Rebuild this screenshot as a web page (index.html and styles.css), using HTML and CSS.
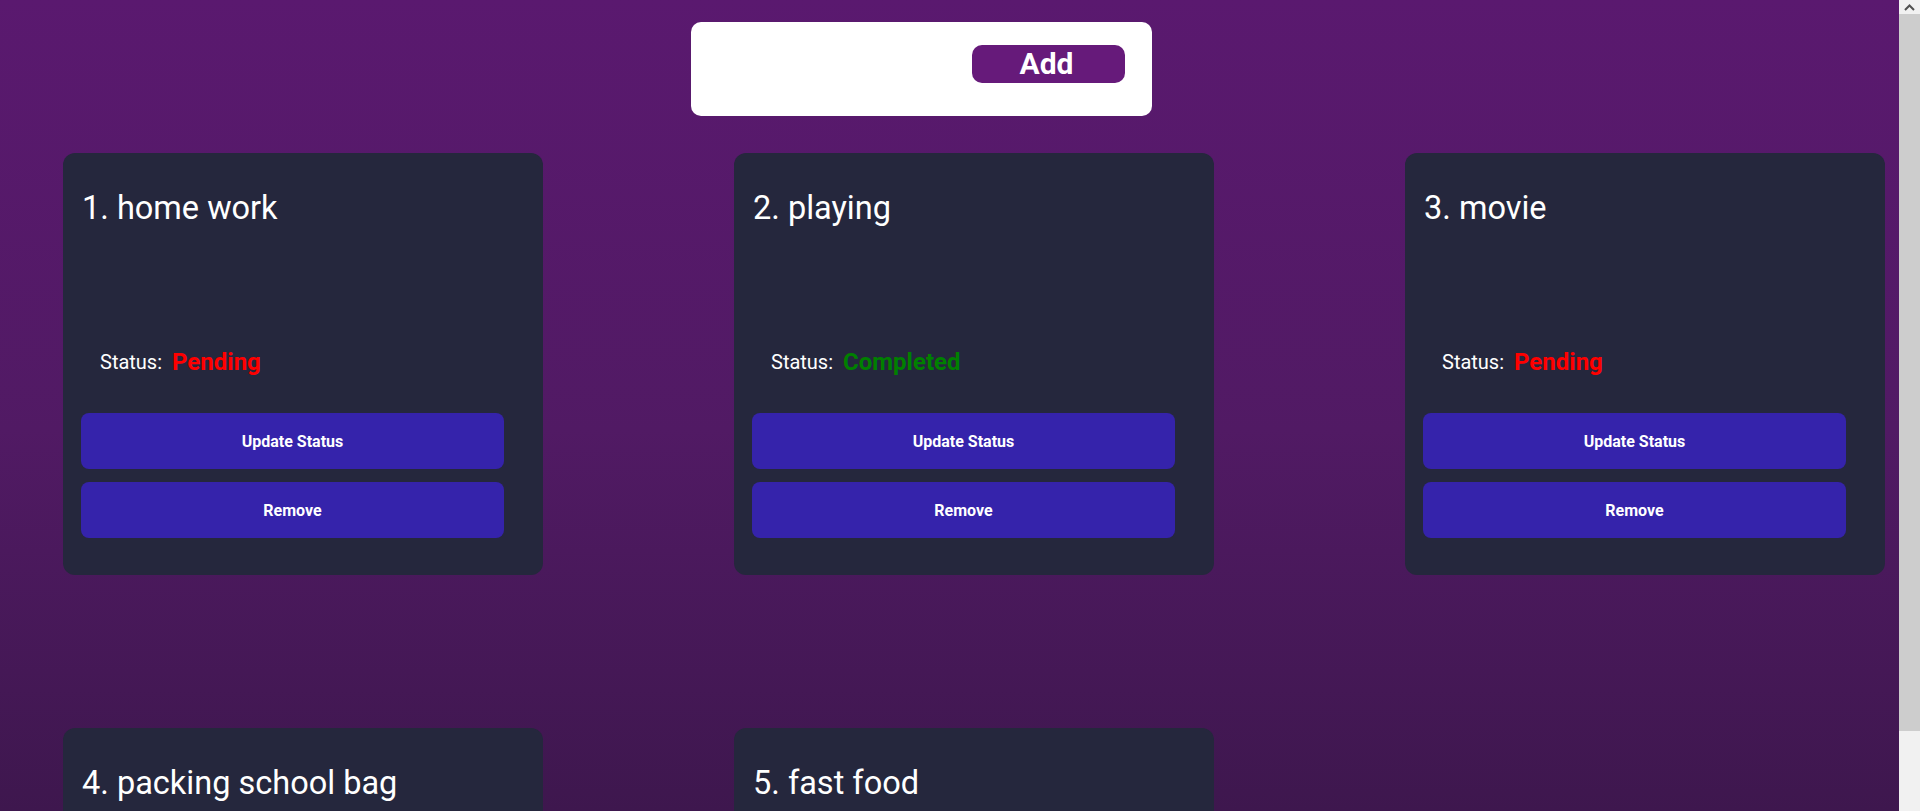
FILE: index.html
```html
<!DOCTYPE html>
<html lang="en">
<head>
<meta charset="utf-8">
<title>Todo</title>
<link rel="stylesheet" href="styles.css">
</head>
<body>
<div class="viewport">
<main class="page">
  <form class="add-form">
    <input class="task-input" type="text" aria-label="New task">
    <button class="add-btn" type="button">Add</button>
  </form>
  <div class="task-list">
    <div class="card">
      <h2 class="card-title">1. home work</h2>
      <div class="status-row"><span class="status-label">Status:</span><span class="status pending">Pending</span></div>
      <button class="card-btn" type="button">Update Status</button>
      <button class="card-btn" type="button">Remove</button>
    </div>
    <div class="card">
      <h2 class="card-title">2. playing</h2>
      <div class="status-row"><span class="status-label">Status:</span><span class="status completed">Completed</span></div>
      <button class="card-btn" type="button">Update Status</button>
      <button class="card-btn" type="button">Remove</button>
    </div>
    <div class="card">
      <h2 class="card-title">3. movie</h2>
      <div class="status-row"><span class="status-label">Status:</span><span class="status pending">Pending</span></div>
      <button class="card-btn" type="button">Update Status</button>
      <button class="card-btn" type="button">Remove</button>
    </div>
    <div class="card">
      <h2 class="card-title">4. packing school bag</h2>
      <div class="status-row"><span class="status-label">Status:</span><span class="status pending">Pending</span></div>
      <button class="card-btn" type="button">Update Status</button>
      <button class="card-btn" type="button">Remove</button>
    </div>
    <div class="card">
      <h2 class="card-title">5. fast food</h2>
      <div class="status-row"><span class="status-label">Status:</span><span class="status pending">Pending</span></div>
      <button class="card-btn" type="button">Update Status</button>
      <button class="card-btn" type="button">Remove</button>
    </div>
  </div>
</main>
<div class="scrollbar" aria-hidden="true">
  <div class="scroll-btn">
    <svg width="11" height="7" viewBox="0 0 11 7"><path d="M1 6 L5.5 1.5 L10 6" fill="none" stroke="#505050" stroke-width="2"/></svg>
  </div>
  <div class="scroll-thumb"></div>
  <div class="scroll-track"></div>
</div>
</div>
</body>
</html>
```
FILE: styles.css
```css
body {
  margin: 0;
  font-family: Roboto, "Liberation Sans", sans-serif;
  background: #3e174e;
}

.viewport {
  display: flex;
  height: 811px;
  overflow: hidden;
}

.page {
  flex: 1;
  min-width: 0;
  height: 885px;
  padding-top: 22px;
  box-sizing: border-box;
  background: linear-gradient(180deg, #5a196f 0px, #511a64 430px, #3e174e 811px, #3a164a 885px);
}

.scrollbar {
  width: 21px;
  flex: none;
  display: flex;
  flex-direction: column;
  background: #f1f1f1;
}

.scroll-btn {
  height: 14px;
  display: flex;
  align-items: center;
  justify-content: center;
}

.scroll-thumb {
  height: 717px;
  background: #cdcdcd;
}

.scroll-track {
  flex: 1;
}

.add-form {
  margin: 0 0 0 691px;
  width: 461px;
  height: 94px;
  box-sizing: border-box;
  background: #ffffff;
  border-radius: 10px;
  display: flex;
  align-items: flex-start;
  padding: 23px 0 0 21px;
}

.task-input {
  width: 260px;
  height: 38px;
  border: none;
  outline: none;
  padding: 0;
  margin: 0;
  background: transparent;
  font: 20px Roboto, sans-serif;
}

.add-btn {
  width: 153px;
  height: 38px;
  border: none;
  border-radius: 10px;
  background: #661a7a;
  color: #ffffff;
  font: 700 30px/38px Roboto, sans-serif;
  padding: 0 4px 0 0;
  cursor: pointer;
}

.task-list {
  margin-top: 37px;
  padding-left: 63px;
  display: grid;
  grid-template-columns: repeat(3, 480px);
  column-gap: 191px;
  row-gap: 153px;
}

.card {
  background: #25273d;
  border-radius: 12px;
  height: 422px;
  box-sizing: border-box;
  padding: 18px 0 37px 18px;
  display: flex;
  flex-direction: column;
  align-items: flex-start;
}

.card-title {
  margin: 17px 0 0 1px;
  font-size: 32.5px;
  line-height: 40px;
  font-weight: 400;
  color: #ffffff;
}

.status-row {
  margin-top: 120px;
  padding-left: 19px;
  height: 28px;
  display: flex;
  align-items: center;
  gap: 10px;
}

.status-label {
  font-size: 20px;
  color: #ffffff;
}

.status {
  font-size: 24px;
  font-weight: 700;
}

.pending { color: #ff0000; }
.completed { color: #008000; }

.card-btn {
  width: 423px;
  height: 56px;
  border: none;
  border-radius: 8px;
  background: #3523ab;
  color: #ffffff;
  font: 700 16px Roboto, sans-serif;
  padding: 0;
  margin-top: 13px;
  cursor: pointer;
}

.status-row + .card-btn {
  margin-top: 37px;
}
```
